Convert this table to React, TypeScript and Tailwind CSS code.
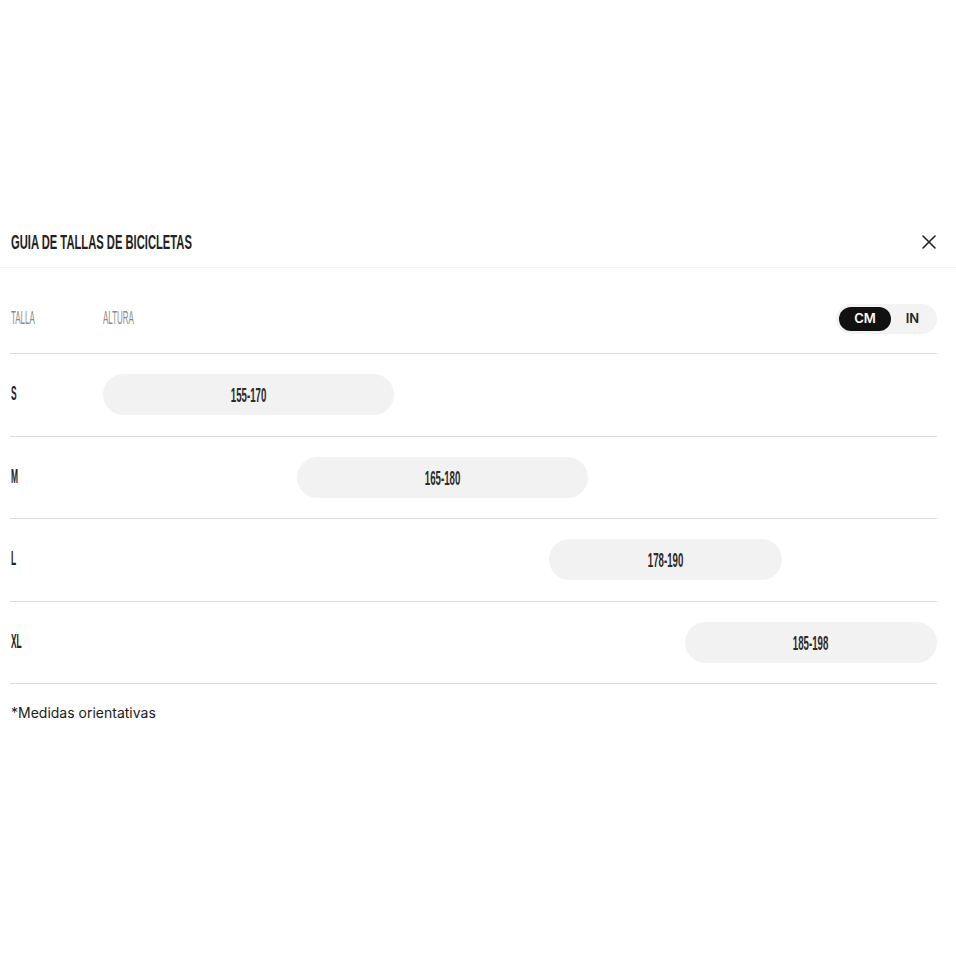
import { useState } from "react";

const sizes = [
  { size: "S", min: 155, max: 170 },
  { size: "M", min: 165, max: 180 },
  { size: "L", min: 178, max: 190 },
  { size: "XL", min: 185, max: 198 },
];

const lo = 155;
const hi = 198;

function Narrow({ children, className = "" }: { children: React.ReactNode; className?: string }) {
  return <span className={`inline-block whitespace-nowrap leading-none ${className}`}>{children}</span>;
}

export default function App() {
  const [unit, setUnit] = useState<"cm" | "in">("cm");

  return (
    <div className="min-h-screen bg-white pt-[216px] font-['Liberation_Sans',Arial,sans-serif] text-[#1a1a1a]">
      {/* Header */}
      <div className="flex h-[52px] items-center justify-between border-b border-[#f3f3f3] pl-[11px] pr-[19px]">
        <Narrow className="origin-left scale-x-[0.56] text-[20px] font-bold text-[#222]">
          GUIA DE TALLAS DE BICICLETAS
        </Narrow>
        <button className="flex h-[16px] w-[16px] items-center justify-center text-[#222]">
          <svg width="14" height="14" viewBox="0 0 14 14" fill="none" stroke="currentColor" strokeWidth="1.6" strokeLinecap="round">
            <path d="M1 1L13 13M13 1L1 13" />
          </svg>
        </button>
      </div>

      <div className="pl-[10px] pr-[19px]">
        {/* Column headers */}
        <div className="flex items-center border-b border-[#dcdcdc] pb-[19px] pt-[36px]">
          <div className="w-[93px] pl-px">
            <Narrow className="origin-left scale-x-[0.42] text-[19px] text-[#8a8a8a]">TALLA</Narrow>
          </div>
          <div className="flex-1">
            <Narrow className="origin-left scale-x-[0.42] text-[19px] text-[#8a8a8a]">ALTURA</Narrow>
          </div>
          <div className="flex h-[30px] items-center rounded-full bg-[#f3f3f3] p-[3px] font-['Inter',sans-serif]">
            <button
              onClick={() => setUnit("cm")}
              className={`h-[24px] w-[52px] rounded-full text-[13px] font-semibold ${unit === "cm" ? "bg-[#111] text-white" : "text-[#222]"}`}
            >
              CM
            </button>
            <button
              onClick={() => setUnit("in")}
              className={`h-[24px] w-[43px] rounded-full text-[13px] font-semibold ${unit === "in" ? "bg-[#111] text-white" : "text-[#222]"}`}
            >
              IN
            </button>
          </div>
        </div>

        {/* Rows */}
        {sizes.map((s) => (
          <div key={s.size} className="flex h-[82.5px] items-center border-b border-[#dcdcdc]">
            <div className="w-[93px] pl-px">
              <Narrow className="origin-left scale-x-[0.4] text-[21px] font-bold text-[#222]">{s.size}</Narrow>
            </div>
            <div className="flex-1">
              <div
                className="flex h-[41px] items-center justify-center rounded-full bg-[#f2f2f2]"
                style={{
                  marginLeft: `${((s.min - lo) / (hi - lo)) * 100}%`,
                  width: `${((s.max - s.min) / (hi - lo)) * 100}%`,
                }}
              >
                <Narrow className="scale-x-[0.46] text-[21px] font-bold text-[#2a2a2a]">
                  {unit === "cm"
                    ? `${s.min}-${s.max}`
                    : `${(s.min / 2.54).toFixed(0)}-${(s.max / 2.54).toFixed(0)}`}
                </Narrow>
              </div>
            </div>
          </div>
        ))}

        <p className="pl-px pt-[19px] font-['Inter',sans-serif] text-[14px] leading-[20px] text-[#1a1a1a]">
          *Medidas orientativas
        </p>
      </div>
    </div>
  );
}
